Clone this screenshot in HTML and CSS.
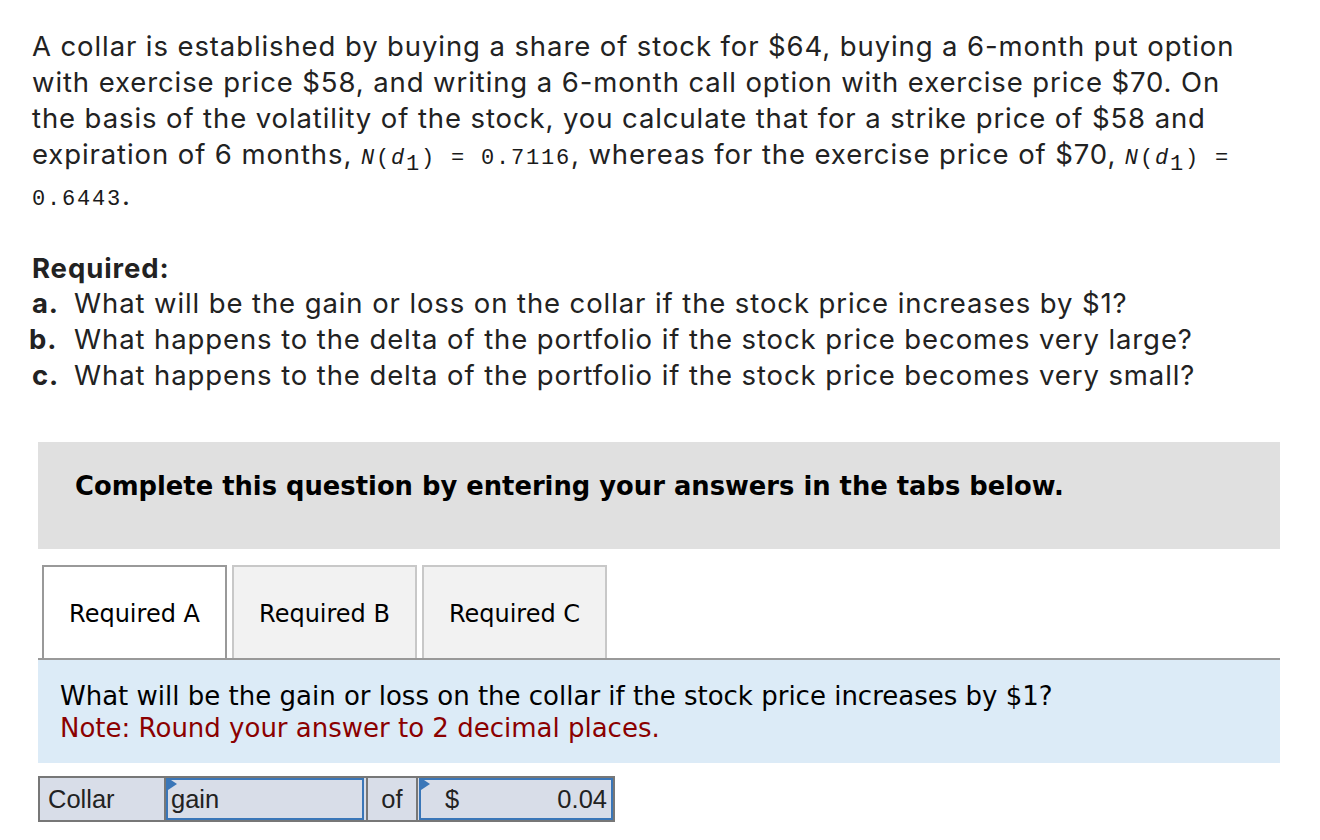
FILE: index.html
```html
<!DOCTYPE html>
<html>
<head>
<meta charset="utf-8">
<link rel="stylesheet" href="styles.css">
</head>
<body>
<div class="page">
  <div class="question">
    <p class="intro">A collar is established by buying a share of stock for $64, buying a 6-month put option with exercise price $58, and writing a 6-month call option with exercise price $70. On the basis of the volatility of the stock, you calculate that for a strike price of $58 and expiration of 6 months, <span class="mono"><i>N</i>(<i>d</i><sub>1</sub>) = 0.7116</span>, whereas for the exercise price of $70, <span class="mono"><i>N</i>(<i>d</i><sub>1</sub>) = 0.6443</span>.</p>
    <div class="required">
      <div class="req-title">Required:</div>
      <div class="req-item"><b class="lbl">a.</b><span>What will be the gain or loss on the collar if the stock price increases by $1?</span></div>
      <div class="req-item"><b class="lbl lbl-b">b.</b><span>What happens to the delta of the portfolio if the stock price becomes very large?</span></div>
      <div class="req-item"><b class="lbl">c.</b><span>What happens to the delta of the portfolio if the stock price becomes very small?</span></div>
    </div>
  </div>

  <div class="instructions">Complete this question by entering your answers in the tabs below.</div>

  <div class="tabs">
    <div class="tab active">Required A</div>
    <div class="tab">Required B</div>
    <div class="tab">Required C</div>
  </div>

  <div class="panel">
    <div class="panel-q">What will be the gain or loss on the collar if the stock price increases by $1?</div>
    <div class="panel-note">Note: Round your answer to 2 decimal places.</div>
  </div>

  <div class="answer">
    <div class="cell label">Collar</div>
    <div class="cell input input-gain"><span class="flag"></span>gain</div>
    <div class="cell of">of</div>
    <div class="cell input input-num"><span class="flag"></span><span class="dollar">$</span><span class="val">0.04</span></div>
  </div>
</div>
</body>
</html>
```

FILE: styles.css
```css
html, body {
  margin: 0;
  padding: 0;
  background: #fff;
}

.page {
  width: 1320px;
  padding-top: 28px;
}

.question {
  padding-left: 32px;
  padding-right: 64px;
  font-family: "Inter", "Open Sans", sans-serif;
  font-size: 27.5px;
  letter-spacing: 0.9px;
  color: #222;
}

.intro {
  margin: 0;
  line-height: 36px;
}

.mono {
  font-family: "Liberation Mono", monospace;
  font-size: 22px;
  letter-spacing: 1.8px;
  color: #1a1a1a;
}

.mono i {
  font-family: "Liberation Mono", monospace;
}

.mono sub {
  font-size: 22px;
  vertical-align: -6px;
  line-height: 16px;
}

.required {
  margin-top: 32px;
  line-height: 36px;
}

.req-title {
  font-weight: 700;
  margin-bottom: -1px;
}

.req-item {
  display: flex;
}

.lbl {
  width: 42px;
  flex: none;
}

.lbl-b {
  margin-left: -3px;
  width: 45px;
}

.instructions {
  margin: 49px 0 0 38px;
  width: 1242px;
  height: 107px;
  box-sizing: border-box;
  background: #e0e0e0;
  padding: 29px 0 0 37px;
  font-family: "DejaVu Sans", Verdana, sans-serif;
  font-weight: 700;
  font-size: 25.8px;
  color: #000;
}

.tabs {
  margin: 16px 0 0 38px;
  width: 1242px;
  display: flex;
  gap: 5px;
  padding-left: 4px;
  box-sizing: border-box;
  border-bottom: 2px solid #999;
}

.tab {
  width: 185px;
  height: 93px;
  box-sizing: border-box;
  display: flex;
  align-items: center;
  justify-content: center;
  background: #f2f2f2;
  border: 2px solid #c8c8c8;
  border-bottom: none;
  font-family: "DejaVu Sans", Verdana, sans-serif;
  font-size: 24px;
  color: #000;
  padding-top: 2px;
}

.tab.active {
  background: #fff;
  border-color: #999;
}

.panel {
  margin-left: 38px;
  width: 1242px;
  height: 103px;
  box-sizing: border-box;
  background: #dcebf7;
  padding: 20px 0 0 22px;
  font-family: "DejaVu Sans", Verdana, sans-serif;
  font-size: 26px;
  line-height: 32px;
  color: #000;
}

.panel-note {
  color: #8b0000;
}

.answer {
  margin: 13px 0 0 38px;
  display: flex;
  width: 577px;
  height: 46px;
  box-sizing: border-box;
  border: 2px solid #777;
  background: #d8dde8;
  font-family: "Liberation Sans", Arial, sans-serif;
  font-size: 25.5px;
  color: #222;
}

.cell {
  box-sizing: border-box;
  display: flex;
  align-items: center;
  height: 100%;
  position: relative;
}

.label {
  width: 126px;
  padding-left: 8px;
  border-right: 2px solid #777;
}

.input {
  border: 2px solid #3a76b8;
  background: #d8dde8;
}

.input-gain {
  width: 198px;
  padding-left: 3px;
}

.of {
  width: 52px;
  justify-content: center;
  border-left: 2px solid #777;
  border-right: 2px solid #777;
  margin-left: 2px;
}

.input-num {
  flex: 1;
  padding: 0 4px 0 24px;
  margin-left: 1px;
}

.dollar {
  flex: none;
}

.val {
  flex: 1;
  text-align: right;
}

.flag {
  position: absolute;
  left: 0;
  top: 0;
  width: 0;
  height: 0;
  border-top: 6px solid transparent;
  border-bottom: 6px solid transparent;
  border-left: 9px solid #3a76b8;
  margin-top: -2px;
}
```
